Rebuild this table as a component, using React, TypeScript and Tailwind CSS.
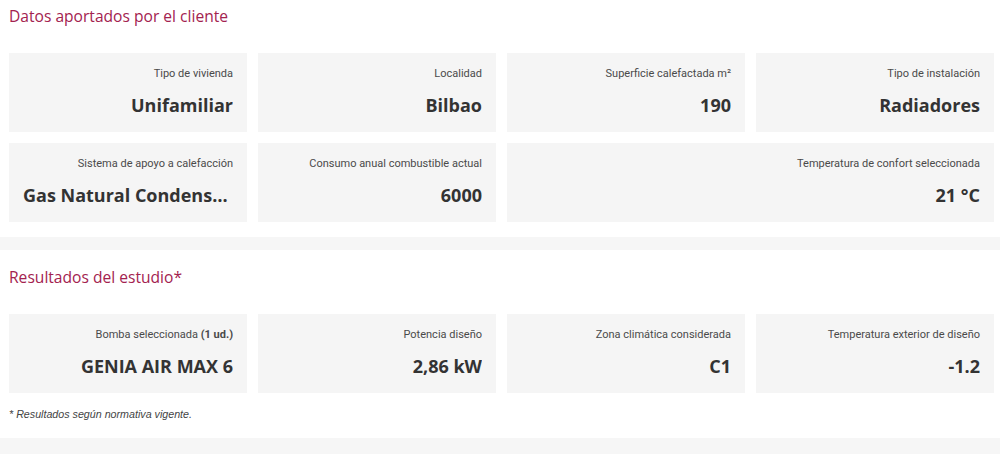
import React from "react";

function Card({ label, value, span }: { label: React.ReactNode; value: string; span?: boolean }) {
  return (
    <div className={`bg-[#f5f5f5] h-[79px] pt-[14px] pr-[14px] pl-[14px] text-right ${span ? "col-span-2" : ""}`}>
      <div className="text-[11px] leading-[14px] text-[#4a4a4a] font-['Roboto',sans-serif]">{label}</div>
      <div className="mt-[12px] text-[18px] leading-[24px] font-bold text-[#333] font-['Open_Sans',sans-serif] truncate">{value}</div>
    </div>
  );
}

export default function App() {
  return (
    <div className="w-[1000px] h-[454px] bg-[#f6f6f6] overflow-hidden">
      <section className="bg-white px-[9px] pt-[4px] pb-[15px]">
        <h2 className="text-[15.6px] leading-[24px] text-[#a3224f] font-['Open_Sans',sans-serif]">Datos aportados por el cliente</h2>
        <div className="mt-[25px] grid grid-cols-4 gap-[11px] w-[985px]">
          <Card label="Tipo de vivienda" value="Unifamiliar" />
          <Card label="Localidad" value="Bilbao" />
          <Card label="Superficie calefactada m²" value="190" />
          <Card label="Tipo de instalación" value="Radiadores" />
          <Card label="Sistema de apoyo a calefacción" value="Gas Natural Condensación" />
          <Card label="Consumo anual combustible actual" value="6000" />
          <Card label="Temperatura de confort seleccionada" value="21 °C" span />
        </div>
      </section>
      <section className="bg-white mt-[13px] px-[9px] pt-[15px] pb-[0px] h-[188px]">
        <h2 className="text-[15.6px] leading-[24px] text-[#a3224f] font-['Open_Sans',sans-serif]">Resultados del estudio*</h2>
        <div className="mt-[25px] grid grid-cols-4 gap-[11px] w-[985px]">
          <Card label={<>Bomba seleccionada <b className="font-bold">(1 ud.)</b></>} value="GENIA AIR MAX 6" />
          <Card label="Potencia diseño" value="2,86 kW" />
          <Card label="Zona climática considerada" value="C1" />
          <Card label="Temperatura exterior de diseño" value="-1.2" />
        </div>
        <p className="mt-[14px] text-[10.7px] leading-[14px] italic text-[#444] font-['Liberation_Sans',sans-serif]">* Resultados según normativa vigente.</p>
      </section>
    </div>
  );
}
